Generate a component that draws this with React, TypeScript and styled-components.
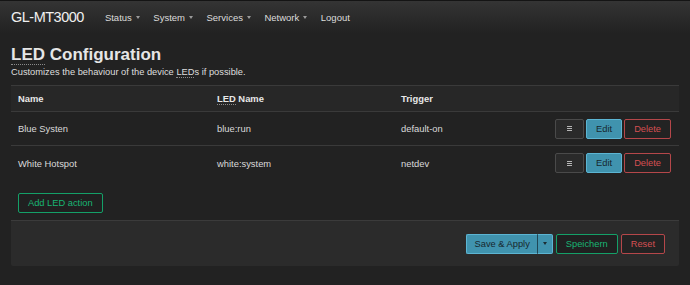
import React from 'react';
import styled, { createGlobalStyle, css } from 'styled-components';

const GlobalStyle = createGlobalStyle`
  html, body {
    margin: 0;
    padding: 0;
    background: #222222;
    color: #e2e2e2;
    font-family: "Liberation Sans", Arial, Helvetica, sans-serif;
  }
  * { box-sizing: border-box; }
`;

const Page = styled.div`
  min-height: 285px;
  background: #222222;
`;

const Navbar = styled.header`
  height: 34px;
  display: flex;
  align-items: center;
  padding-left: 11px;
  border-top: 1px solid #141414;
  background: linear-gradient(#343434, #252525 80%, #222222);
`;

const Brand = styled.a`
  font-size: 14.5px;
  letter-spacing: -0.5px;
  color: #f0f0f0;
  margin-right: 21px;
  margin-top: -1px;
`;

const Menu = styled.nav`
  display: flex;
  gap: 13.5px;
`;

const MenuItem = styled.a`
  display: flex;
  align-items: center;
  gap: 4px;
  font-size: 9.5px;
  color: #dcdcdc;
`;

const Caret = styled.span`
  width: 0;
  height: 0;
  border-left: 2.5px solid transparent;
  border-right: 2.5px solid transparent;
  border-top: 3px solid #9a9a9a;
`;

const Main = styled.main`
  padding: 0 11px;
`;

const Title = styled.h2`
  margin: 11px 0 0;
  font-size: 17px;
  line-height: 20px;
  font-weight: bold;
  color: #e6e6e6;
`;

const Abbr = styled.abbr`
  text-decoration: none;
  border-bottom: 1px dotted #8a8a8a;
`;

const Description = styled.p`
  margin: 1px 0 0;
  font-size: 9.3px;
  line-height: 12px;
  color: #dedede;
`;

const Table = styled.div`
  margin-top: 7px;
  border-top: 1px solid #3a3a3a;
`;

const Row = styled.div<{ $head?: boolean; $last?: boolean }>`
  display: grid;
  grid-template-columns: 199px 184px 1fr auto;
  align-items: center;
  padding: 0 8px 0 7px;
  height: ${p => (p.$head ? '26px' : '34px')};
  background: ${p => (p.$head ? '#272727' : 'transparent')};
  border-bottom: ${p => (p.$last ? 'none' : '1px solid #3a3a3a')};
  font-size: 9.4px;
  font-weight: ${p => (p.$head ? 'bold' : 'normal')};
  color: ${p => (p.$head ? '#e8e8e8' : '#dadada')};
`;

const Actions = styled.div`
  display: flex;
  gap: 2px;
`;

type Variant = 'neutral' | 'primary' | 'negative' | 'positive';

const variants = {
  neutral: css`
    background: #2a2a2a;
    border-color: #4a4a4a;
    color: #bbbbbb;
  `,
  primary: css`
    background: #4093ae;
    border-color: #5cb5d3;
    color: #17272d;
  `,
  negative: css`
    background: #232323;
    border-color: #b5474a;
    color: #d44f52;
  `,
  positive: css`
    background: #202020;
    border-color: #14a068;
    color: #19b574;
  `,
};

const Button = styled.button<{ $variant: Variant }>`
  height: 20px;
  padding: 0 9px;
  border: 1px solid;
  border-radius: 2px;
  font-family: inherit;
  font-size: 9.3px;
  display: inline-flex;
  align-items: center;
  justify-content: center;
  ${p => variants[p.$variant]}
`;

const IconButton = styled(Button)`
  width: 29px;
  padding: 0;
`;

const AddButton = styled(Button)`
  margin: 13px 0 0 7px;
`;

const Footer = styled.div`
  margin-top: 7px;
  height: 46px;
  display: flex;
  justify-content: flex-end;
  align-items: center;
  gap: 3px;
  padding: 0 14px 0 0;
  background: #2b2b2b;
  border-top: 1px solid #3b3b3b;
  border-radius: 0 0 2px 2px;
`;

const Split = styled.div`
  display: flex;
`;

const SplitMain = styled(Button)`
  padding: 0 7px 0 8px;
  border-radius: 2px 0 0 2px;
  border-right-color: #1f4655;
`;

const SplitToggle = styled(Button)`
  width: 15px;
  padding: 0;
  border-left: none;
  border-radius: 0 2px 2px 0;
`;

const ToggleCaret = styled(Caret)`
  border-top-color: #1c2d33;
`;

const SortIcon = () => (
  <svg width="5" height="5" viewBox="0 0 5 5" fill="#b5b5b5">
    <rect x="0" y="0" width="5" height="1" />
    <rect x="0" y="2" width="5" height="1" />
    <rect x="0" y="4" width="5" height="1" />
  </svg>
);

const leds = [
  { name: 'Blue Systen', sysfs: 'blue:run', trigger: 'default-on' },
  { name: 'White Hotspot', sysfs: 'white:system', trigger: 'netdev' },
];

const menu = ['Status', 'System', 'Services', 'Network'];

export default function App() {
  return (
    <Page>
      <GlobalStyle />
      <Navbar>
        <Brand>GL-MT3000</Brand>
        <Menu>
          {menu.map(m => (
            <MenuItem key={m}>
              {m}
              <Caret />
            </MenuItem>
          ))}
          <MenuItem>Logout</MenuItem>
        </Menu>
      </Navbar>
      <Main>
        <Title>
          <Abbr title="Light Emitting Diode">LED</Abbr> Configuration
        </Title>
        <Description>
          Customizes the behaviour of the device <Abbr title="Light Emitting Diode">LED</Abbr>s if possible.
        </Description>
        <Table>
          <Row $head>
            <span>Name</span>
            <span>
              <Abbr title="Light Emitting Diode">LED</Abbr> Name
            </span>
            <span>Trigger</span>
            <span />
          </Row>
          {leds.map((l, i) => (
            <Row key={l.name} $last={i === leds.length - 1}>
              <span>{l.name}</span>
              <span>{l.sysfs}</span>
              <span>{l.trigger}</span>
              <Actions>
                <IconButton $variant="neutral">
                  <SortIcon />
                </IconButton>
                <Button $variant="primary">Edit</Button>
                <Button $variant="negative">Delete</Button>
              </Actions>
            </Row>
          ))}
        </Table>
        <AddButton $variant="positive">Add LED action</AddButton>
        <Footer>
          <Split>
            <SplitMain $variant="primary">Save &amp; Apply</SplitMain>
            <SplitToggle $variant="primary">
              <ToggleCaret />
            </SplitToggle>
          </Split>
          <Button $variant="positive">Speichern</Button>
          <Button $variant="negative">Reset</Button>
        </Footer>
      </Main>
    </Page>
  );
}
